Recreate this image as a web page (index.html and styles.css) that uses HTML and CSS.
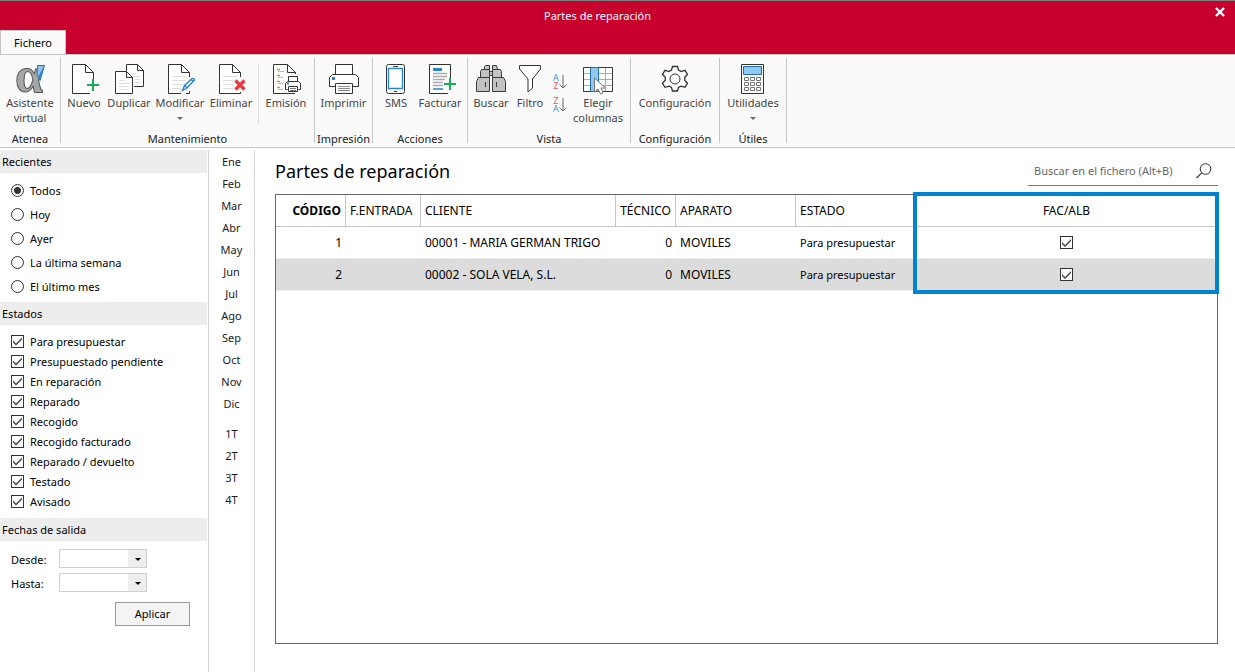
FILE: index.html
```html
<!DOCTYPE html>
<html lang="es">
<head>
<meta charset="utf-8">
<title>Partes de reparación</title>
<link rel="stylesheet" href="styles.css">
</head>
<body>
<header class="titlebar">
  <h1 class="window-title">Partes de reparación</h1>
  <button class="close" aria-label="Cerrar"><svg width="10" height="10" viewBox="0 0 10 10"><path d="M1 1l8 8M9 1l-8 8" stroke="#fff" stroke-width="2.4"/></svg></button>
  <button class="tab">Fichero</button>
</header>

<nav class="ribbon">
  <section class="group">
    <div class="tools">
      <button class="tool w58">
        <svg width="30" height="30" viewBox="0 0 30 30"><text class="alpha" x="0" y="28">α</text><path d="M22.500 1.500h7L25 16.500l-3-6z" fill="#8fc4ee" stroke="#1d6fae"/><path d="M29 2l-4 14-1.500-4z" fill="#2f86c8"/></svg>
        <span>Asistente<br>virtual</span>
      </button>
    </div>
    <h2 class="group-name">Atenea</h2>
  </section>

  <section class="group maintenance">
    <div class="tools">
      <button class="tool w44">
        <svg width="30" height="30" viewBox="0 0 30 30"><path class="ink" d="M24.500 17V8.500L16.500.5h-13v29H21M16.500.5v8h8"/><path d="M24 15v12M18 21h12" stroke="#16ad50" stroke-width="2"/></svg>
        <span>Nuevo</span>
      </button>
      <button class="tool w46">
        <svg width="30" height="30" viewBox="0 0 30 30"><path class="ink" d="M12.500 7V.5h11l6 6v16H20M23.500.5v6h6"/><path class="ink" d="M1.500 7.500h11l6 6v16h-17zM12.500 7.500v6h6"/><path class="faint" d="M5 16.500h6M5 19.500h10M5 22.500h10M5 25.500h10M19 9.500h3M19 12.500h7M21 15.500h5M21 18.500h5"/></svg>
        <span>Duplicar</span>
      </button>
      <button class="tool w56">
        <svg width="30" height="30" viewBox="0 0 30 30"><path class="ink" d="M24.500 13V8.500L16.500.5h-13v29H16M21 29.500h3.500V27M16.500.5v8h8"/><path class="faint" d="M7 12.500h14M7 16.500h14M7 20.500h11M7 24.500h9"/><path d="M17.500 26.500l2-5 7.500-7q2-.5 2.500 1.500l-7.500 8zM19.500 21.500l2.500 2.500M26 15.500l2 2" fill="#e4f1fb" stroke="#2a86c8" stroke-width="1.300"/></svg>
        <span>Modificar</span><i class="arrow"></i>
      </button>
      <button class="tool w46">
        <svg width="30" height="30" viewBox="0 0 30 30"><path class="ink" d="M24.500 13V8.500L16.500.5h-13v29h21V28M16.500.5v8h8"/><path class="faint" d="M7 12.500h14M7 16.500h12M7 20.500h11M7 24.500h11"/><path d="M19.500 16.500l9 9M28.500 16.500l-9 9" stroke="#e93b40" stroke-width="3.200"/></svg>
        <span>Eliminar</span>
      </button>
      <span class="divider"></span>
      <button class="tool w46">
        <svg width="30" height="30" viewBox="0 0 30 30"><path class="ink" d="M24.500 10V8.500L16.500.5h-14v29h21.500M16.500.5v8h8"/><path d="M6 5.500h3M6 11.500h3M6 17.500h3M6 23.500h3" stroke="#f08a00" stroke-width="1.400"/><path d="M7 7.500h6M7 13.500h5M7 19.500h5M7 25.500h5" stroke="#bbb"/><path class="ink" d="M17.500 17.500v-5h9v5M16.500 25.500h-2v-6l2-2h11l2 2v6h-2M17.500 22.500h9v5h-9z"/><path d="M19 24.500h6M19 26.500h6" stroke="#777"/><path d="M16 19.500h2" stroke="#2a86c8" stroke-width="2"/></svg>
        <span>Emisión</span>
      </button>
    </div>
    <h2 class="group-name">Mantenimiento</h2>
  </section>

  <section class="group">
    <div class="tools">
      <button class="tool w55">
        <svg width="30" height="30" viewBox="0 0 30 30"><path class="ink" d="M6.500 10.500V.5h17v10M6.500 22.500h-6V13.500l3-3h23l3 3v9h-6M6.500 19.500h17v10h-17z"/><path d="M9 22.500h12M9 24.500h12M9 26.500h12" stroke="#888"/><path d="M3 14.500h3" stroke="#2a86c8" stroke-width="3"/></svg>
        <span>Imprimir</span>
      </button>
    </div>
    <h2 class="group-name">Impresión</h2>
  </section>

  <section class="group actions">
    <div class="tools">
      <button class="tool w44">
        <svg width="20" height="30" viewBox="0 0 20 30"><rect class="ink" x=".5" y=".5" width="18" height="29" rx="2"/><path d="M2.500 4.500h14v20h-14z" fill="#fff" stroke="#2a86c8" stroke-width="1.400"/><path class="ink" d="M7 2.500h5M8 27.500h3"/></svg>
        <span>SMS</span>
      </button>
      <button class="tool w44">
        <svg width="30" height="30" viewBox="0 0 30 30"><path class="ink" d="M25.500 14V.5h-21v29H23"/><path d="M8 5.500h9" stroke="#2a86c8" stroke-width="3"/><path d="M8 9.500h14M8 12.500h14M8 15.500h12M8 18.500h10M8 21.500h10" stroke="#aaa" stroke-width="1.300"/><path d="M8 25h10" stroke="#2a86c8" stroke-width="1.500"/><path d="M25 14v12M19 20h12" stroke="#16ad50" stroke-width="2"/></svg>
        <span>Facturar</span>
      </button>
    </div>
    <h2 class="group-name">Acciones</h2>
  </section>

  <section class="group view">
    <div class="tools">
      <button class="tool w44">
        <svg width="30" height="30" viewBox="0 0 30 30"><path d="M9.500 1.500h4v4h-5v-3zM16.500 1.500h4l1 4h-5zM5.500 5.500h8v8h-9v-6zM16.500 5.500h8l1 2v6h-9zM2.500 13.500h11v14H.5v-10zM16.500 13.500h11l2 4v10h-13zM13.500 7.500h3v4h-3z" fill="#c4c2c1" stroke="#3a3a3c"/><path d="M9.500 18v5M20.500 18v5" stroke="#3a3a3c"/></svg>
        <span>Buscar</span>
      </button>
      <button class="tool w34">
        <svg width="24" height="30" viewBox="0 0 24 30"><path class="ink" d="M1.500 1.500h21v3.500l-8 10v9l-4.500 4v-13l-8.500-10z"/></svg>
        <span>Filtro</span>
      </button>
      <div class="sorts">
        <button class="sort" aria-label="Orden ascendente"><span class="az"><b class="blue">A</b><b class="red">Z</b></span><svg width="8" height="14" viewBox="0 0 8 14"><path d="M4 0v13M.5 9.500L4 13l3.500-3.500" fill="none" stroke="#666"/></svg></button>
        <button class="sort" aria-label="Orden descendente"><span class="az"><b class="red">Z</b><b class="blue">A</b></span><svg width="8" height="14" viewBox="0 0 8 14"><path d="M4 0v13M.5 9.500L4 13l3.500-3.500" fill="none" stroke="#666"/></svg></button>
      </div>
      <button class="tool w50">
        <svg width="30" height="30" viewBox="0 0 30 30"><path d="M.5 3.500h29v24H.5z" fill="#fff" stroke="#3a3a3c"/><path d="M1 9.500h28M1 15.500h28M1 21.500h28M22.500 4v23" stroke="#aaa"/><path d="M7.500 3.500h8v24h-8z" fill="#90c8ef" stroke="#1d6fae"/><path d="M11.500 14v14l3.500-3 2.500 5 2.500-1-2-5h4.500z" fill="#fff" stroke="#777"/></svg>
        <span>Elegir<br>columnas</span>
      </button>
    </div>
    <h2 class="group-name">Vista</h2>
  </section>

  <section class="group">
    <div class="tools">
      <button class="tool w86">
        <svg width="30" height="30" viewBox="0 0 30 30"><path class="ink" d="M12.500 2.500h5l1 3.600 2.500 1.400 4-1.200 2.500 4-2.800 3v3l2.800 3-2.500 4-4-1.200-2.500 1.400-1 3.500h-5l-1-3.500-2.500-1.400-4 1.200-2.500-4 2.800-3v-3l-2.800-3 2.500-4 4 1.200 2.500-1.400z" stroke-width="1.300"/><circle class="ink" cx="15" cy="15" r="5"/></svg>
        <span>Configuración</span>
      </button>
    </div>
    <h2 class="group-name">Configuración</h2>
  </section>

  <section class="group">
    <div class="tools">
      <button class="tool w64">
        <svg width="24" height="30" viewBox="0 0 24 30"><path class="ink" d="M.5.5h22v29H.5z"/><path d="M2.500 2.500h18v8h-18z" fill="#90c8ef" stroke="#1d6fae"/><path d="M3.500 13.500h4v3h-4zM9.500 13.500h4v3h-4zM15.500 13.500h4v3h-4zM3.500 18.500h4v3h-4zM9.500 18.500h4v3h-4zM15.500 18.500h4v3h-4zM3.500 23.500h4v3h-4zM9.500 23.500h4v3h-4zM15.500 23.500h4v3h-4z" fill="#fff" stroke="#777"/></svg>
        <span>Utilidades</span><i class="arrow"></i>
      </button>
    </div>
    <h2 class="group-name">Útiles</h2>
  </section>
</nav>

<div class="workspace">
  <aside class="filters">
    <h2 class="bar">Recientes</h2>
    <div class="options radios">
      <label><input type="radio" name="rec" checked>Todos</label>
      <label><input type="radio" name="rec">Hoy</label>
      <label><input type="radio" name="rec">Ayer</label>
      <label><input type="radio" name="rec">La última semana</label>
      <label><input type="radio" name="rec">El último mes</label>
    </div>
    <h2 class="bar">Estados</h2>
    <div class="options checks">
      <label><input type="checkbox" checked>Para presupuestar</label>
      <label><input type="checkbox" checked>Presupuestado pendiente</label>
      <label><input type="checkbox" checked>En reparación</label>
      <label><input type="checkbox" checked>Reparado</label>
      <label><input type="checkbox" checked>Recogido</label>
      <label><input type="checkbox" checked>Recogido facturado</label>
      <label><input type="checkbox" checked>Reparado / devuelto</label>
      <label><input type="checkbox" checked>Testado</label>
      <label><input type="checkbox" checked>Avisado</label>
    </div>
    <h2 class="bar">Fechas de salida</h2>
    <form class="dates">
      <div class="date-row"><label for="desde">Desde:</label><span class="combo"><select id="desde"><option></option></select></span></div>
      <div class="date-row"><label for="hasta">Hasta:</label><span class="combo"><select id="hasta"><option></option></select></span></div>
      <button class="apply" type="button">Aplicar</button>
    </form>
  </aside>

  <nav class="periods">
    <div class="period-set">
      <button>Ene</button><button>Feb</button><button>Mar</button><button>Abr</button><button>May</button><button>Jun</button><button>Jul</button><button>Ago</button><button>Sep</button><button>Oct</button><button>Nov</button><button>Dic</button>
    </div>
    <div class="period-set">
      <button>1T</button><button>2T</button><button>3T</button><button>4T</button>
    </div>
  </nav>

  <main class="content">
    <div class="content-head">
      <h2 class="title">Partes de reparación</h2>
      <div class="search">
        <input type="text" aria-label="Buscar en el fichero" placeholder="Buscar en el fichero (Alt+B)">
        <button aria-label="Buscar"><svg width="16" height="16" viewBox="0 0 16 16"><circle cx="9.500" cy="6" r="5.300" fill="none" stroke="#333"/><path d="M5.700 9.800L.5 15" stroke="#333" stroke-width="1.200"/></svg></button>
      </div>
    </div>
    <div class="frame">
      <table class="grid">
        <colgroup><col class="c70"><col class="c75"><col class="c195"><col class="c60"><col class="c120"><col class="c120"><col></colgroup>
        <thead>
          <tr><th class="num sorted">CÓDIGO</th><th>F.ENTRADA</th><th>CLIENTE</th><th class="num">TÉCNICO</th><th>APARATO</th><th>ESTADO</th><th class="mid">FAC/ALB<span class="highlight"></span></th></tr>
        </thead>
        <tbody>
          <tr><td class="num">1</td><td></td><td>00001 - MARIA GERMAN TRIGO</td><td class="num">0</td><td>MOVILES</td><td class="state">Para presupuestar</td><td class="mid"><input type="checkbox" aria-label="FAC/ALB 1" checked></td></tr>
          <tr class="selected"><td class="num">2</td><td></td><td>00002 - SOLA VELA, S.L.</td><td class="num">0</td><td>MOVILES</td><td class="state">Para presupuestar</td><td class="mid"><input type="checkbox" aria-label="FAC/ALB 2" checked></td></tr>
        </tbody>
      </table>
    </div>
  </main>
</div>
</body>
</html>
```
FILE: styles.css
```css
* { box-sizing: border-box; }

body {
  margin: 0;
  min-height: 100vh;
  display: flex;
  flex-direction: column;
  background: #fff;
  color: #000;
  font: 11px/15px "Noto Sans", "Open Sans", sans-serif;
}

button, input, select { font: inherit; color: inherit; }
button { margin: 0; padding: 0; border: 0; background: none; white-space: nowrap; }
h1, h2 { margin: 0; font: inherit; }
svg { display: block; overflow: visible; }

/* Title bar */
.titlebar {
  display: grid;
  grid-template-columns: 1fr auto 1fr;
  grid-template-rows: 29px 24px;
  border-top: 1px solid #7f7f7f;
  background: #c8002d;
}
.window-title {
  grid-column: 1 / 4;
  grid-row: 1;
  justify-self: center;
  align-self: center;
  padding-right: 40px;
  color: #fff;
}
.close {
  grid-column: 3;
  grid-row: 1;
  justify-self: end;
  padding: 6px 10px 13px;
}
.tab {
  grid-row: 2;
  justify-self: start;
  width: 66px;
  border: 1px solid #c6c6c6;
  border-bottom: 0;
  background: #fafafa;
}

/* Ribbon */
.ribbon {
  display: flex;
  height: 94px;
  padding: 3px 0 4px;
  border-top: 1px solid #c6c6c6;
  border-bottom: 1px solid #c6c6c6;
  background: #fafafa;
}
.group {
  display: flex;
  flex-direction: column;
  padding: 6px 1px 0;
  border-right: 1px solid #c6c6c6;
}
.maintenance { width: 254px; }
.actions { width: 95px; }
.view { width: 163px; }
.tools { display: flex; flex: 1; }
.group-name { text-align: center; color: #222; height: 12px; }
.tool {
  display: flex;
  flex-direction: column;
  align-items: center;
  color: #444;
}
.tool svg { margin-bottom: 1px; }
.w34 { width: 34px; }
.w44 { width: 44px; }
.w46 { width: 46px; }
.w50 { width: 50px; }
.w55 { width: 55px; }
.w56 { width: 56px; }
.w58 { width: 58px; }
.w64 { width: 64px; }
.w86 { width: 86px; }
.divider { width: 1px; height: 60px; margin: 0 4px; background: #ddd; }
.arrow {
  margin-top: 7px;
  border: 3px solid transparent;
  border-top-color: #666;
  border-bottom: 0;
}
.ink { fill: #fff; stroke: #333; }
.faint { fill: none; stroke: #dedede; }
.alpha {
  font: bold 50px "Liberation Serif", serif;
  fill: #a6a6a6;
  stroke: #555;
  stroke-width: 1px;
}
.sorts { display: flex; flex-direction: column; gap: 7px; margin: 0 3px; padding-top: 10px; }
.sort { display: flex; align-items: center; height: 16px; width: 20px; padding-left: 3px; }
.az { display: flex; flex-direction: column; font-size: 9px; line-height: 8px; }
.az b { font-weight: 400; }
.blue { color: #3b97d3; }
.red { color: #e8555a; }

/* Workspace */
.workspace { display: flex; flex: 1; padding-top: 2px; }
.filters { width: 209px; border-right: 1px solid #d5d5d5; }
.bar {
  height: 23px;
  margin-right: 1px;
  padding: 4px 2px;
  background: #ededed;
}
.options { display: flex; flex-direction: column; padding-left: 11px; }
.options label { display: flex; align-items: center; gap: 6px; }
.radios { padding-top: 5px; padding-bottom: 4px; }
.radios label { height: 24px; }
.checks { padding-top: 6px; padding-bottom: 7px; }
.checks label { height: 20px; }

input[type="radio"], input[type="checkbox"] {
  appearance: none;
  flex: none;
  width: 13px;
  height: 13px;
  margin: 0;
  border: 1px solid #333;
  background: #fff;
}
input[type="radio"] { border-radius: 50%; }
input[type="radio"]:checked {
  background: radial-gradient(circle, #333 3px, #fff 4px);
}
input[type="checkbox"]:checked::before {
  content: "";
  display: block;
  height: 11px;
  background: #444;
  clip-path: polygon(1px 5px, 4px 8px, 10px 2px, 10px 4px, 4px 10px, 1px 7px);
}

.dates { display: flex; flex-direction: column; gap: 5px; padding: 8px 0 0 11px; }
.date-row { display: flex; align-items: center; }
.date-row label { width: 48px; padding-top: 2px; }
.combo { display: grid; position: relative; width: 88px; height: 19px; }
.combo select {
  appearance: none;
  border: 1px solid #cfcfcf;
  border-radius: 0;
  background: linear-gradient(to left, #eee 18px, #fff 18px);
}
.combo::after {
  content: "";
  position: absolute;
  right: 6px;
  top: 9px;
  border: 3px solid transparent;
  border-top-color: #000;
  border-bottom: 0;
  pointer-events: none;
}
.apply {
  width: 75px;
  height: 24px;
  margin: 5px 0 0 104px;
  padding-bottom: 2px;
  border: 1px solid #999;
  background: #f4f4f4;
}

.periods {
  display: flex;
  flex-direction: column;
  gap: 8px;
  width: 46px;
  border-right: 1px solid #d5d5d5;
}
.period-set { display: flex; flex-direction: column; }
.period-set button { height: 22px; color: #1a1a1a; }

/* Records */
.content {
  display: flex;
  flex: 1;
  flex-direction: column;
  padding: 0 17px 28px 20px;
}
.content-head { display: flex; justify-content: space-between; height: 44px; }
.title { font-size: 18px; line-height: 42px; }
.search {
  display: flex;
  align-items: center;
  width: 190px;
  height: 29px;
  margin-top: 7px;
  padding: 0 6px;
  border-bottom: 1px solid #777;
}
.search input { flex: 1; min-width: 0; padding: 0 0 2px; border: 0; outline: 0; }
.search input::placeholder { color: #666; }
.frame { flex: 1; border: 1px solid #666; }
.grid {
  width: 100%;
  table-layout: fixed;
  border-collapse: separate;
  border-spacing: 0;
  font-size: 12px;
}
.c60 { width: 60px; }
.c70 { width: 70px; }
.c75 { width: 75px; }
.c120 { width: 120px; }
.c195 { width: 195px; }
.grid th, .grid td {
  height: 32px;
  padding: 0 4px;
  text-align: left;
  font-weight: 400;
  white-space: nowrap;
}
.grid th {
  position: relative;
  border-right: 1px solid #c6c6c6;
  border-bottom: 1px solid #c6c6c6;
}
.grid th:nth-last-child(-n+2) { border-right: 0; }
.grid td { border-bottom: 1px solid #eee; }
.grid .num { text-align: right; }
.grid .mid { text-align: center; }
.grid .mid input { display: block; margin: 0 auto; }
.grid .sorted { font-weight: 700; }
.grid .state { font-size: 11px; }
.selected td { background: #dcdcdc; }
.highlight {
  position: absolute;
  inset: -3px -2px auto -3px;
  height: 102px;
  border: 4px solid #0084cf;
}
```
